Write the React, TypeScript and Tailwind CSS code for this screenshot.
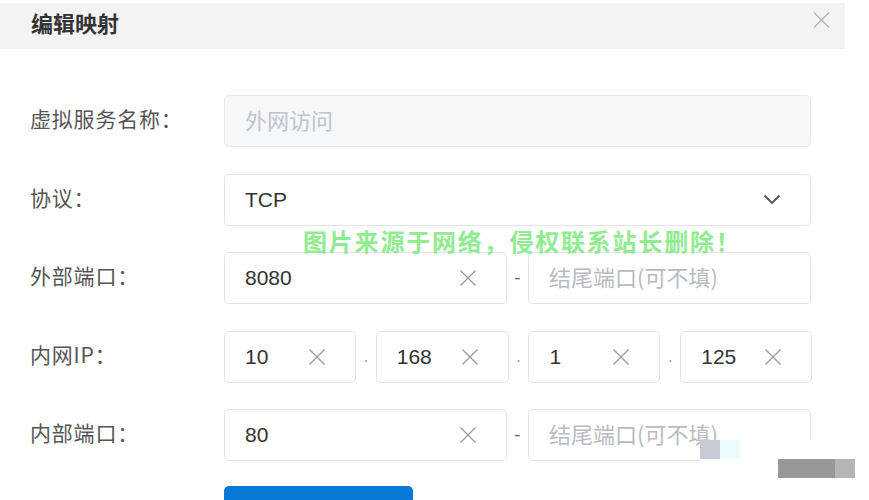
import type { ReactNode } from "react";

const cjk = "font-['Noto_Sans_CJK_SC','Noto_Sans',sans-serif]";
const latin = "font-['Liberation_Sans','Noto_Sans_CJK_SC',sans-serif]";

function ClearIcon() {
  return (
    <svg width="18" height="18" viewBox="0 0 18 18" className="shrink-0">
      <path
        d="M1.5 1.5 L16.5 16.5 M16.5 1.5 L1.5 16.5"
        stroke="#9a9a9a"
        strokeWidth="1.3"
        fill="none"
      />
    </svg>
  );
}

function ChevronIcon() {
  return (
    <svg width="18" height="11" viewBox="0 0 18 11" className="shrink-0">
      <path
        d="M1.5 1.5 L9 9 L16.5 1.5"
        stroke="#555"
        strokeWidth="1.8"
        fill="none"
      />
    </svg>
  );
}

function FormRow({ label, children }: { label: string; children: ReactNode }) {
  return (
    <div className="flex h-[52px] items-center">
      <span
        className={`w-[224px] -translate-y-[2px] pl-[30px] text-[21px] tracking-[0.8px] text-[#555] ${cjk}`}
      >
        {label}
      </span>
      <div className="flex w-[588px] items-center">{children}</div>
    </div>
  );
}

function ClearInput({ value, className = "" }: { value: string; className?: string }) {
  return (
    <div
      className={`flex h-[52px] items-center justify-between rounded-[5px] border border-[#e2e4ea] bg-white pl-[20px] pr-[29px] ${className}`}
    >
      <span className={`text-[21px] text-[#333] ${latin}`}>{value}</span>
      <ClearIcon />
    </div>
  );
}

function PlaceholderInput({ text, className = "" }: { text: string; className?: string }) {
  return (
    <div
      className={`flex h-[52px] items-center rounded-[5px] border border-[#e2e4ea] bg-white pl-[20px] ${className}`}
    >
      <span className={`-translate-y-[2px] text-[22px] text-[#b8bbc2] ${cjk}`}>{text}</span>
    </div>
  );
}

function Dash() {
  return (
    <span className={`flex w-[21px] justify-center text-[19px] text-[#666] ${latin}`}>-</span>
  );
}

function Dot() {
  return (
    <span className="flex h-[52px] w-[20px] items-end justify-center pb-[19px] text-[14px] leading-none text-[#999]">
      .
    </span>
  );
}

export default function App() {
  return (
    <div className="relative h-[500px] w-[869px] overflow-hidden bg-white">
      <div className="mt-[3px] flex h-[46px] w-[845px] items-start justify-between bg-[#f3f3f3] pl-[31px] pr-[15px] pt-[4px]">
        <span className={`text-[22px] font-bold leading-[30px] text-[#333] ${cjk}`}>编辑映射</span>
        <svg width="17" height="16" viewBox="0 0 17 16" className="mt-[5px]">
          <path d="M1 0.5 L16 15.5 M16 0.5 L1 15.5" stroke="#b0b0b0" strokeWidth="1.2" fill="none" />
        </svg>
      </div>

      <div className="mt-[46px] flex flex-col gap-[26.5px]">
        <FormRow label="虚拟服务名称：">
          <div className="flex h-[52px] w-[587px] items-center rounded-[5px] border border-[#e6e8ee] bg-[#f5f7fa] pl-[20px]">
            <span className={`-translate-y-[2px] text-[22px] text-[#c0c4cc] ${cjk}`}>外网访问</span>
          </div>
        </FormRow>

        <FormRow label="协议：">
          <div className="flex h-[52px] w-[587px] items-center justify-between rounded-[5px] border border-[#e2e4ea] bg-white pl-[20px] pr-[29px]">
            <span className={`text-[21px] text-[#333] ${latin}`}>TCP</span>
            <ChevronIcon />
          </div>
        </FormRow>

        <FormRow label="外部端口：">
          <ClearInput value="8080" className="w-[283px]" />
          <Dash />
          <PlaceholderInput text="结尾端口(可不填)" className="w-[283px]" />
        </FormRow>

        <FormRow label="内网IP：">
          <ClearInput value="10" className="w-[132px]" />
          <Dot />
          <ClearInput value="168" className="w-[133px]" />
          <Dot />
          <ClearInput value="1" className="w-[132px]" />
          <Dot />
          <ClearInput value="125" className="w-[132px]" />
        </FormRow>

        <FormRow label="内部端口：">
          <ClearInput value="80" className="w-[283px]" />
          <Dash />
          <PlaceholderInput text="结尾端口(可不填)" className="w-[283px]" />
        </FormRow>
      </div>

      <div className="mt-[25px] pl-[224px]">
        <div className="h-[48px] w-[189px] rounded-[5px] bg-[#0a78d6]" />
      </div>

      {/* watermark */}
      <span
        className={`absolute left-[303px] top-[226px] text-[24px] font-bold leading-[30px] tracking-[1.8px] text-[#8fec8f] ${cjk}`}
      >
        图片来源于网络，侵权联系站长删除！
      </span>

      {/* screenshot artifacts */}
      <div className="absolute left-[700px] top-[440px] h-[60px] w-[169px] bg-white" />
      <div className="absolute left-[700px] top-[440px] h-[19px] w-[20px] bg-[#c8cad6]" />
      <div className="absolute left-[720px] top-[440px] h-[19px] w-[20px] bg-[#ecfbfd]" />
      <div className="absolute left-[778px] top-[459px] h-[19px] w-[57px] bg-[#989898]" />
      <div className="absolute left-[835px] top-[459px] h-[19px] w-[20px] bg-[#b5b5b5]" />
    </div>
  );
}
